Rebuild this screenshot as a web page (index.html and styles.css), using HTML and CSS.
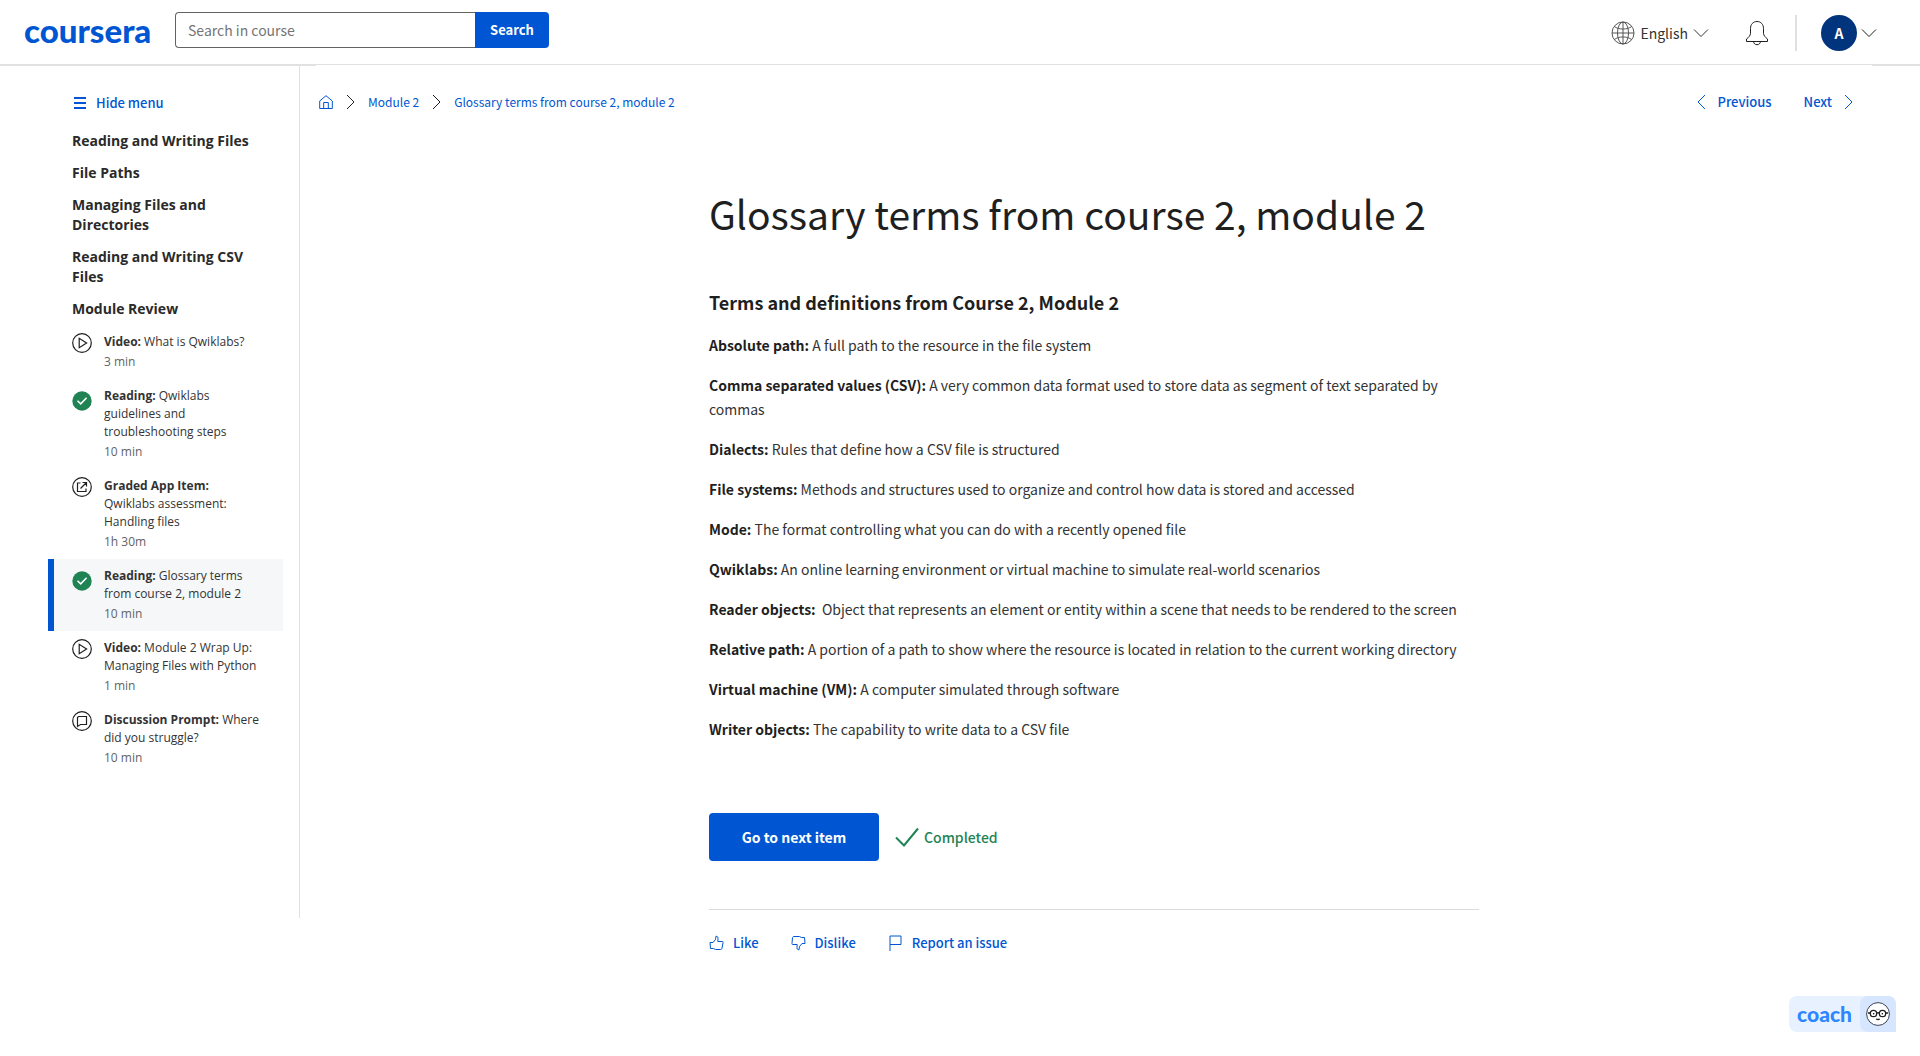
FILE: index.html
```html
<!DOCTYPE html>
<html lang="en">
<head>
<meta charset="utf-8">
<meta name="viewport" content="width=device-width, initial-scale=1">
<title>Glossary terms from course 2, module 2 | Coursera</title>
<link rel="stylesheet" href="styles.css">
</head>
<body>
<header class="topbar">
  <a class="logo" href="#">coursera</a>
  <form class="search" role="search">
    <input class="search-input" type="text" placeholder="Search in course" aria-label="Search in course">
    <button class="search-button" type="submit">Search</button>
  </form>
  <div class="account">
    <button class="language" type="button">
      <svg width="24" height="24" viewBox="0 0 24 24" class="line soft"><circle cx="12" cy="12" r="11"/><ellipse cx="12" cy="12" rx="5.5" ry="11"/><path d="M1 12h22M12 1v22M3.5 5.5c4 3.400 13 3.400 17 0M3.500 18.500c4-3.400 13-3.400 17 0"/></svg>
      <span>English</span>
      <svg width="16" height="10" viewBox="0 0 16 10" class="line"><path d="M1 1.500l7 7 7-7"/></svg>
    </button>
    <button class="bell" type="button" aria-label="Notifications">
      <svg width="24" height="26" viewBox="0 0 24 26" class="line"><path d="M1.500 21.500v-2.500c2.500-2 3.500-3 4-5.500V8.500C5.500 4.500 8 1.500 12 1.500s6.500 3 6.500 7v5c.5 2.500 1.500 3.500 4 5.500v2.500zM8.500 21.500c.3 2 1.500 3.200 3.500 3.200s3.200-1.200 3.500-3.200"/></svg>
    </button>
    <button class="profile" type="button" aria-label="Account menu">
      <span class="avatar">A</span>
      <svg width="16" height="10" viewBox="0 0 16 10" class="line"><path d="M1 1.500l7 7 7-7"/></svg>
    </button>
  </div>
</header>

<div class="layout">
  <nav class="sidebar" aria-label="Module items">
    <button class="hide-menu" type="button">
      <svg width="12" height="12" viewBox="0 0 12 12" class="bars"><path d="M0 1h12M0 6h12M0 11h12"/></svg>
      <span>Hide menu</span>
    </button>
    <h2 class="section">Reading and Writing Files</h2>
    <h2 class="section">File Paths</h2>
    <h2 class="section">Managing Files and Directories</h2>
    <h2 class="section">Reading and Writing CSV Files</h2>
    <h2 class="section">Module Review</h2>
    <ul class="items">
      <li><a class="item" href="#">
        <svg class="item-icon" width="20" height="20" viewBox="0 0 20 20"><circle cx="10" cy="10" r="9.300"/><path d="M7.200 5.300v9.400l7.400-4.700z"/></svg>
        <span class="item-text"><b>Video:</b> What is Qwiklabs?<small>3 min</small></span></a></li>
      <li><a class="item" href="#">
        <svg class="item-icon done" width="20" height="20" viewBox="0 0 20 20"><circle cx="10" cy="10" r="9.700"/><path d="M5.500 9.700l3.200 3.100 5.900-6"/></svg>
        <span class="item-text"><b>Reading:</b> Qwiklabs guidelines and troubleshooting steps<small>10 min</small></span></a></li>
      <li><a class="item" href="#">
        <svg class="item-icon" width="20" height="20" viewBox="0 0 20 20"><circle cx="10" cy="10" r="9.300"/><path d="M8.500 6h-3v8.500h8.500v-3M10.500 5.500h4v4M14.500 5.500l-6 6"/></svg>
        <span class="item-text"><b>Graded App Item:</b> Qwiklabs assessment: Handling files<small>1h 30m</small></span></a></li>
      <li><a class="item active" href="#" aria-current="page">
        <svg class="item-icon done" width="20" height="20" viewBox="0 0 20 20"><circle cx="10" cy="10" r="9.700"/><path d="M5.500 9.700l3.200 3.100 5.900-6"/></svg>
        <span class="item-text"><b>Reading:</b> Glossary terms from course 2, module 2<small>10 min</small></span></a></li>
      <li><a class="item" href="#">
        <svg class="item-icon" width="20" height="20" viewBox="0 0 20 20"><circle cx="10" cy="10" r="9.300"/><path d="M7.200 5.300v9.400l7.400-4.700z"/></svg>
        <span class="item-text"><b>Video:</b> Module 2 Wrap Up: Managing Files with Python<small>1 min</small></span></a></li>
      <li><a class="item" href="#">
        <svg class="item-icon" width="20" height="20" viewBox="0 0 20 20"><circle cx="10" cy="10" r="9.300"/><path d="M6.500 5.500h8v8H8.500l-3 2V6.500z"/></svg>
        <span class="item-text"><b>Discussion Prompt:</b> Where did you struggle?<small>10 min</small></span></a></li>
    </ul>
  </nav>

  <main class="panel">
    <div class="crumb-row">
      <nav class="crumbs" aria-label="Breadcrumb">
        <a href="#" aria-label="Home"><svg width="14" height="14" viewBox="0 0 14 14" class="line"><path d="M.7 6L7 .7 13.300 6v7.500H.7zM4.700 13.500V7.500h4.600v6"/></svg></a>
        <svg width="9" height="16" viewBox="0 0 9 16" class="line"><path d="M1 1l7 7-7 7"/></svg>
        <a href="#">Module 2</a>
        <svg width="9" height="16" viewBox="0 0 9 16" class="line"><path d="M1 1l7 7-7 7"/></svg>
        <a href="#">Glossary terms from course 2, module 2</a>
      </nav>
      <div class="pager">
        <a href="#"><svg width="9" height="16" viewBox="0 0 9 16" class="line"><path d="M8 1L1 8l7 7"/></svg>Previous</a>
        <a href="#">Next<svg width="9" height="16" viewBox="0 0 9 16" class="line"><path d="M1 1l7 7-7 7"/></svg></a>
      </div>
    </div>

    <article class="reading">
      <h1>Glossary terms from course 2, module 2</h1>
      <h2>Terms and definitions from Course 2, Module 2</h2>
      <p><b>Absolute path:</b> A full path to the resource in the file system</p>
      <p><b>Comma separated values (CSV):</b> A very common data format used to store data as segment of text separated by commas</p>
      <p><b>Dialects:</b> Rules that define how a CSV file is structured</p>
      <p><b>File systems:</b> Methods and structures used to organize and control how data is stored and accessed</p>
      <p><b>Mode:</b> The format controlling what you can do with a recently opened file</p>
      <p><b>Qwiklabs:</b> An online learning environment or virtual machine to simulate real-world scenarios</p>
      <p><b>Reader objects:</b>&nbsp; Object that represents an element or entity within a scene that needs to be rendered to the screen</p>
      <p><b>Relative path:</b> A portion of a path to show where the resource is located in relation to the current working directory</p>
      <p><b>Virtual machine (VM):</b> A computer simulated through software</p>
      <p><b>Writer objects:</b> The capability to write data to a CSV file</p>
      <div class="finish">
        <button class="next-item" type="button">Go to next item</button>
        <span class="completed"><svg width="24" height="20" viewBox="0 0 24 20"><path d="M1 10.500l8 8L23 1.500"/></svg>Completed</span>
      </div>
      <div class="feedback">
        <button type="button"><svg width="15" height="16" viewBox="0 0 15 16" class="line"><path d="M1 7.500h3L6.500 4.500 7 1.200c1.800 0 2.200 1.300 2 2.500L8.800 6.500h4.700c.7 0 .6.700.5 1.200l-1 5.500c-.2 1-.7 1.300-1.500 1.300H6.500l-2-1H1.500z"/></svg>Like</button>
        <button type="button"><svg width="15" height="16" viewBox="0 0 15 16" class="line"><path d="M14 8.500h-3L8.500 11.500 8 14.800c-1.800 0-2.200-1.300-2-2.500l.2-2.800H1.500c-.7 0-.6-.7-.5-1.200L1.500 2.800c.2-1 .7-1.300 1.500-1.300h5.500l2 1h3z"/></svg>Dislike</button>
        <button type="button"><svg width="15" height="16" viewBox="0 0 15 16" class="line"><path d="M2 16V1h11v8.500H2"/></svg>Report an issue</button>
      </div>
    </article>
  </main>
</div>

<button class="coach" type="button">
  <span class="coach-name">coach</span>
  <span class="coach-face"><svg width="24" height="24" viewBox="0 0 24 24"><circle cx="12" cy="12" r="11.400" fill="#fff" stroke="#3b4256"/><g fill="none" stroke="#1f1f1f" stroke-width="1.300"><circle cx="7.500" cy="11.500" r="3.200"/><circle cx="16.500" cy="11.500" r="3.200"/><path d="M10.700 11.200q1.300-1 2.600 0M2 11h2.300M19.700 11H22M10.200 17q1.800 1 3.600 0"/></g><circle cx="7.700" cy="11.700" r=".8"/><circle cx="16.300" cy="11.700" r=".8"/></svg></span>
</button>
</body>
</html>
```
FILE: styles.css
```css
* { box-sizing: border-box; }

body {
  margin: 0;
  background: #fff;
  color: #1f1f1f;
  font: 14px/24px "Noto Sans CJK SC", "Noto Sans", sans-serif;
}

button {
  padding: 0;
  border: 0;
  background: none;
  color: inherit;
  font: inherit;
  cursor: pointer;
}

a { color: #0056d2; text-decoration: none; }
svg { display: block; flex: none; }
.line { fill: none; stroke: currentColor; stroke-width: 1; }
.soft { stroke: #555; }

.topbar {
  display: flex;
  align-items: center;
  height: 66px;
  padding: 0 43px 0 24px;
  border-bottom: 2px solid #e1e1e1;
}

.logo {
  width: 151px;
  font: 900 33px/36px Lato, sans-serif;
  padding-bottom: 4px;
}

.search { display: flex; height: 36px; margin-bottom: 4px; }
.search-input {
  width: 300px;
  padding: 0 12px;
  border: 1px solid #636363;
  border-right: 0;
  border-radius: 4px 0 0 4px;
  color: #1f1f1f;
  font: inherit;
}
.search-input::placeholder { color: #757575; }
.search-button {
  width: 74px;
  border-radius: 0 4px 4px 0;
  background: #0056d2;
  color: #fff;
  font-size: 13px;
  font-weight: 700;
}

.account { display: flex; align-items: center; margin: 2px 0 0 auto; }
.language { display: flex; align-items: center; gap: 5px; color: #333; }
.bell { margin: 0 26px 0 36px; }
.profile {
  display: flex;
  align-items: center;
  gap: 4px;
  padding-left: 24px;
  border-left: 2px solid #e1e1e1;
}
.avatar {
  width: 36px;
  border-radius: 50%;
  background: #00347d;
  color: #fff;
  font-weight: 700;
  line-height: 36px;
}

.layout { display: flex; align-items: flex-start; }

.sidebar {
  flex: none;
  width: 300px;
  min-height: 852px;
  padding: 25px 16px 0 48px;
  border-right: 1px solid #e1e1e1;
  font-family: "Open Sans", sans-serif;
}
.hide-menu {
  display: flex;
  align-items: center;
  gap: 10px;
  margin: 0 0 10px 26px;
  color: #0056d2;
  font: 500 13px/24px "Noto Sans CJK SC", sans-serif;
}
.bars { stroke: currentColor; stroke-width: 2; }
.section {
  margin: 0;
  padding: 6px 24px;
  color: #2a2a2a;
  font-size: 14px;
  font-weight: 700;
  line-height: 20px;
}
.items { margin: 0; padding: 0; list-style: none; }
.item {
  display: flex;
  gap: 12px;
  padding: 8px 22px 8px 18px;
  border-left: 6px solid transparent;
  color: #333;
  font-size: 12px;
  line-height: 18px;
}
.item.active { border-color: #0056d2; background: #f5f7f8; }
.item-icon { fill: none; stroke: #1f1f1f; stroke-width: 1.2; }
.item-icon.done { margin-top: 4px; stroke: #fff; stroke-width: 1.6; }
.item-icon.done circle { fill: #1f8354; stroke: none; }
.item small { display: block; margin-top: 2px; color: #636363; font-size: 12px; }

.panel {
  flex: 1;
  margin: -1px 48px 0 16px;
  background: #fff;
}
.crumb-row {
  display: flex;
  justify-content: space-between;
  padding: 25px 19px 0 3px;
  font-size: 13px;
}
.crumbs, .pager, .pager a { display: flex; align-items: center; }
.crumbs { gap: 13px; font-size: 12px; }
.pager { gap: 32px; font-weight: 500; }
.pager a { gap: 12px; }

.reading { max-width: 770px; margin: 0 auto; }
h1 { margin: 67px 0 0; font-size: 39px; font-weight: 400; line-height: 64px; }
.reading h2 { margin: 45px 0 19px; font-size: 18px; line-height: 24px; }
.reading p { margin: 0 0 16px; color: #333; }
.reading b { color: #1f1f1f; }

.finish {
  display: flex;
  align-items: center;
  gap: 16px;
  padding: 56px 0 48px;
  border-bottom: 1px solid #dadada;
}
.next-item {
  width: 170px;
  height: 48px;
  border-radius: 4px;
  background: #0056d2;
  color: #fff;
  font-weight: 700;
}
.completed { display: flex; align-items: center; gap: 5px; color: #1f8354; font-weight: 500; }
.completed path { fill: none; stroke: currentColor; stroke-width: 2; }

.feedback { display: flex; gap: 32px; padding: 21px 0; color: #0056d2; font-size: 13px; font-weight: 500; }
.feedback button { display: flex; align-items: center; gap: 9px; }

.coach {
  position: fixed;
  right: 24px;
  bottom: 24px;
  display: flex;
  border-radius: 8px 8px 0 8px;
  background: #e8f1ff;
}
.coach-name { padding: 0 8px; color: #2d86ff; font: 900 21px/36px Lato, sans-serif; }
.coach-face { padding: 6px; border-radius: 8px 8px 0 8px; background: #d6e6ff; }
```
